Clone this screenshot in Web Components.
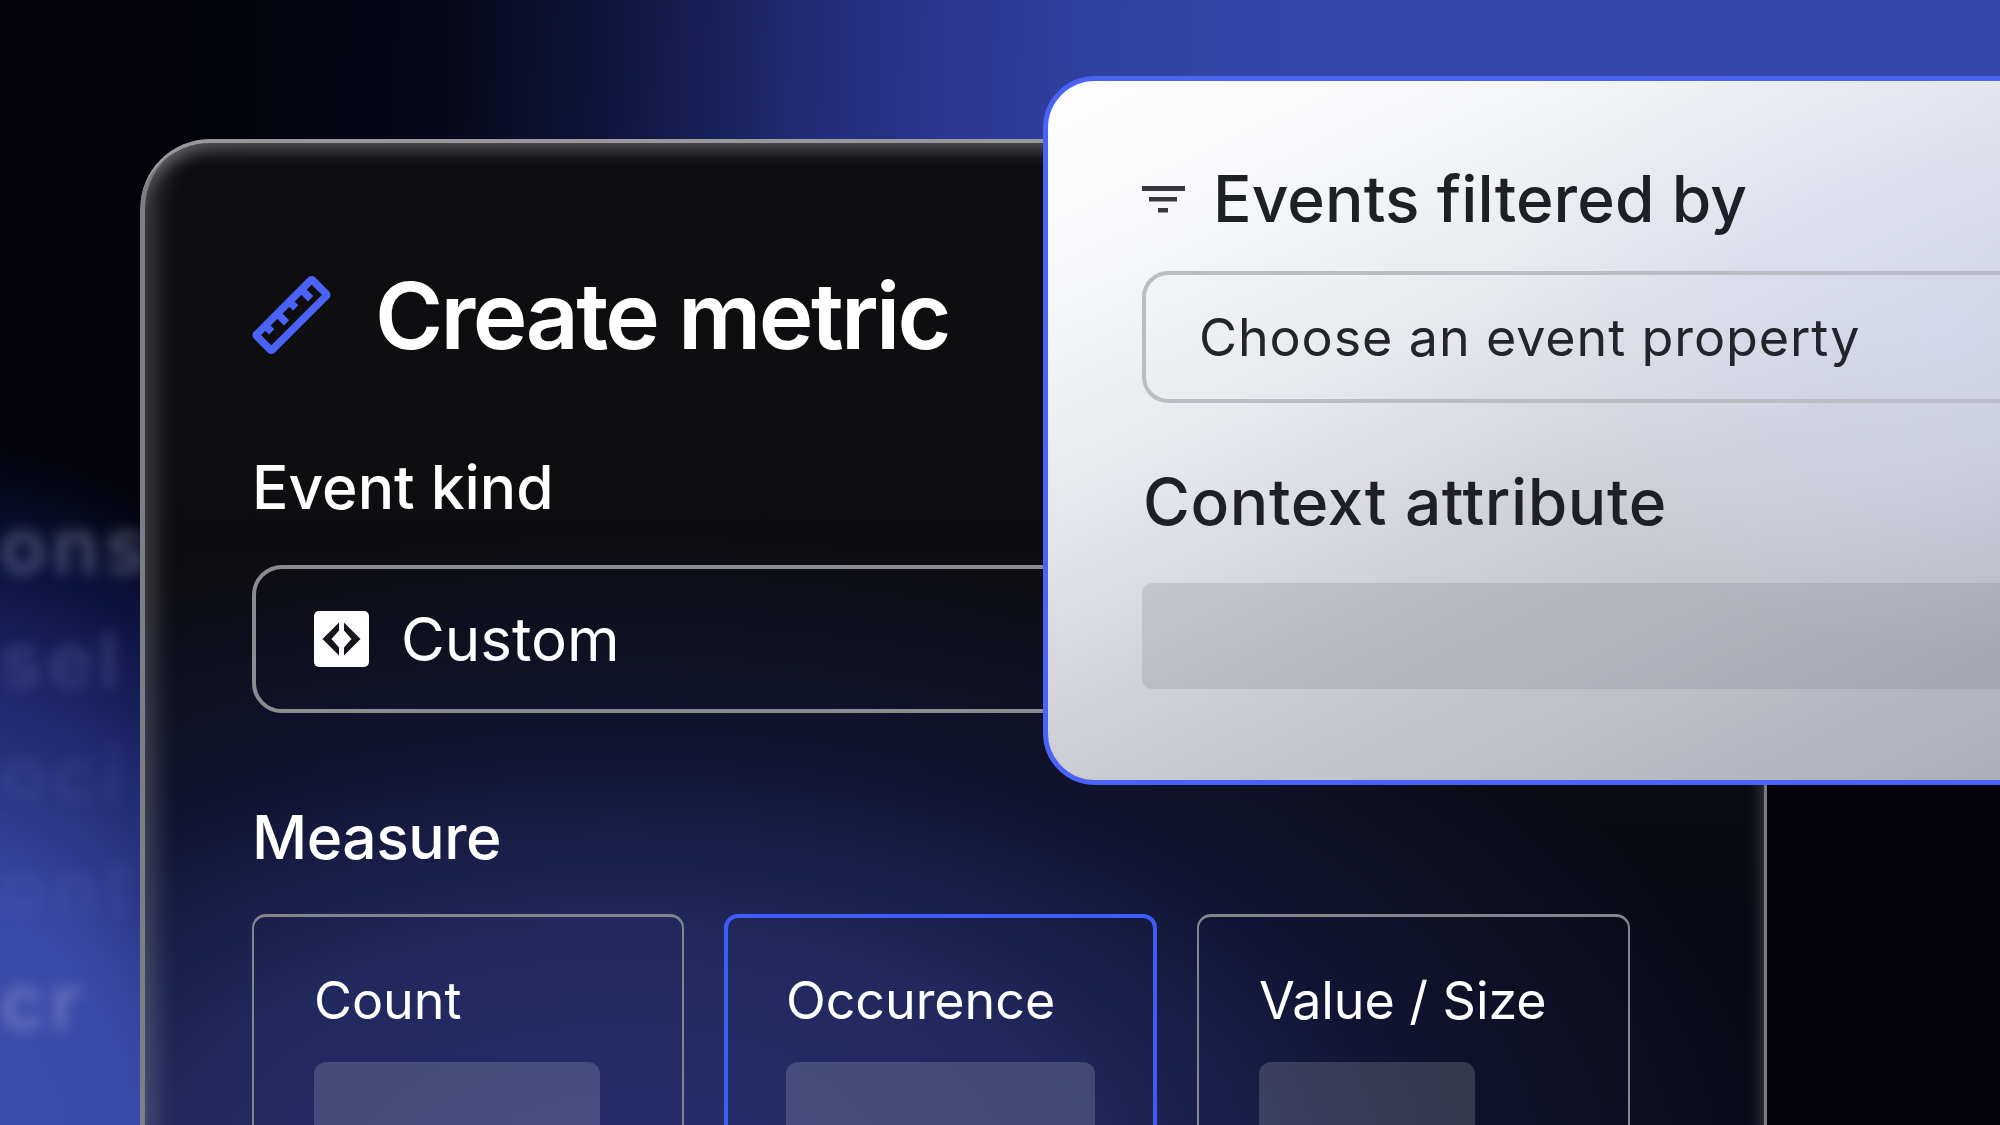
<!doctype html>
<html>
<head>
<meta charset="utf-8">
<style>
  html, body { margin: 0; height: 100%; background: #05050c; overflow: hidden; }
</style>
</head>
<body>
<metric-stage>
  <blur-text slot="backdrop"></blur-text>
  <metric-panel>
    <panel-title>Create metric</panel-title>
    <field-label>Event kind</field-label>
    <kind-select>Custom</kind-select>
    <field-label class="measure">Measure</field-label>
    <measure-row>
      <measure-card bar="286" width="432">Count</measure-card>
      <measure-card bar="309" width="433" selected>Occurence</measure-card>
      <measure-card bar="216" width="433">Value / Size</measure-card>
    </measure-row>
  </metric-panel>
  <filter-card slot="overlay"></filter-card>
</metric-stage>

<script>
(() => {
  const FONT = `Inter, "Noto Sans", "Liberation Sans", sans-serif`;

  const define = (name, html, setup) => {
    customElements.define(name, class extends HTMLElement {
      constructor() {
        super();
        this.attachShadow({mode: 'open'}).innerHTML = html;
      }
      connectedCallback() {
        if (setup) setup(this);
      }
    });
  };

  define('metric-stage', `
    <style>
      :host {
        display: block;
        position: relative;
        width: 2000px;
        height: 1125px;
        overflow: hidden;
        font-family: ${FONT};
        background:
          linear-gradient(92deg, rgba(3,3,9,0) 0, #03030a 220px, #07081a 450px, #0f143a 600px, #1a2460 740px, #212c78 810px, #2a3790 950px, #30409e 1080px, #3346a8 1300px, #3547ab 2000px) top / 100% 220px no-repeat,
          radial-gradient(540px 740px at -60px 1180px, #3f4fb0 0%, #3a4aa8 38%, #212b72 64%, #0d1340 84%, rgba(4,5,16,0) 100%),
          #030309;
      }
      .flow { padding: 139px 0 0 140px; }
    </style>
    <slot name="backdrop"></slot>
    <div class="flow"><slot></slot></div>
    <slot name="overlay"></slot>
  `);

  define('blur-text', `
    <style>
      :host {
        position: absolute;
        left: 0;
        top: 488px;
        font: 600 76px/114px ${FONT};
        letter-spacing: 6px;
        color: rgba(195,200,228,.34);
        filter: blur(7px);
        white-space: nowrap;
      }
      div:nth-child(3) { color: rgba(135,150,225,.26); }
      div:nth-child(4), div:nth-child(5) { color: rgba(110,125,215,.14); }
    </style>
    <div>ons</div><div>sel</div><div>oci</div><div>ont</div><div>cr</div>
  `);

  define('metric-panel', `
    <style>
      :host {
        display: block;
        position: relative;
        box-sizing: border-box;
        width: 1627px;
        height: 1100px;
        padding: 135px 0 0 112px;
        border-radius: 70px 70px 0 0;
        background:
          radial-gradient(1180px 640px at 480px 1040px, #272f6e 0%, #20285c 40%, rgba(20,24,62,.75) 66%, rgba(14,14,20,0) 100%),
          linear-gradient(180deg, #0e0e10 0%, #0e0e11 30%, #0a0a14 70%, #0a0a16 100%);
        box-shadow:
          inset 0 5px 0 -1px #97979c,
          inset 6px 0 0 -1px #7d7d85,
          inset -4px 0 0 -1px #7a7a80,
          inset 0 18px 16px -6px rgba(170,170,175,.42),
          inset 26px 0 22px -10px rgba(170,170,175,.3),
          inset -16px 0 14px -8px rgba(170,170,175,.22);
      }
    </style>
    <slot></slot>
  `);

  define('panel-title', `
    <style>
      :host {
        display: flex;
        align-items: center;
        gap: 43px;
        height: 82px;
        margin-left: -1px;
        font-size: 92.500px;
        font-weight: 600;
        letter-spacing: -2.6px;
        color: #fff;
        white-space: nowrap;
      }
      svg { flex: none; width: 81px; height: 82px; }
    </style>
    <svg viewBox="-40.5 -41 81 82">
      <g transform="rotate(-45)" fill="none" stroke="#4a63f6" stroke-width="7.500" stroke-linejoin="round">
        <rect x="-39.500" y="-11" width="79" height="22" rx="1"/>
        <path d="M-26 -11v9M-9 -11v13M8 -11v9M25 -11v13"/>
      </g>
    </svg>
    <span><slot></slot></span>
  `);

  define('field-label', `
    <style>
      :host {
        display: block;
        margin-top: 95px;
        font-size: 60.500px;
        line-height: 72px;
        font-weight: 500;
        color: #fff;
      }
      :host(.measure) { margin-top: 88px; letter-spacing: -.5px; }
    </style>
    <slot></slot>
  `);

  define('kind-select', `
    <style>
      :host {
        display: flex;
        align-items: center;
        gap: 32px;
        box-sizing: border-box;
        width: 900px;
        height: 148px;
        margin-top: 42px;
        padding-left: 58px;
        border: 4px solid #8b8b92;
        border-radius: 30px;
        font-size: 60px;
        font-weight: 400;
        color: #fff;
      }
      svg { flex: none; width: 55px; height: 56px; }
    </style>
    <svg viewBox="0 0 55 56">
      <rect width="55" height="56" rx="5" fill="#fff"/>
      <path fill="#15151b" d="M25 11.500 8.500 28 25 44.500V36.500L17.500 28 25 19.500ZM30 11.500 46.500 28 30 44.500V36.500L37.500 28 30 19.500Z"/>
    </svg>
    <span><slot></slot></span>
  `);

  define('measure-row', `
    <style>
      :host { display: flex; gap: 40px; margin-top: 41px; }
    </style>
    <slot></slot>
  `);

  define('measure-card', `
    <style>
      :host {
        display: block;
        box-sizing: border-box;
        height: 400px;
        padding: 50px 0 0 60px;
        border: 2px solid #85858c;
        border-top-width: 3px;
        border-radius: 14px;
        font-size: 52px;
        line-height: 68px;
        letter-spacing: -.06px;
        color: #fff;
      }
      :host([selected]) { border: 4px solid #3f5cf5; padding: 49px 0 0 58px; }
      .bar {
        height: 260px;
        margin-top: 27px;
        border-radius: 12px;
        background: rgba(255,255,255,.16);
      }
    </style>
    <slot></slot>
    <div class="bar"></div>
  `, (el) => {
    el.style.width = el.getAttribute('width') + 'px';
    el.shadowRoot.querySelector('.bar').style.width = el.getAttribute('bar') + 'px';
  });

  define('filter-card', `
    <style>
      :host {
        position: absolute;
        left: 1043px;
        top: 76px;
        width: 1100px;
        height: 709px;
        box-sizing: border-box;
        padding: 80px 0 0 94px;
        border: 5px solid #4a63f6;
        border-radius: 52px;
        color: #1f2026;
        background:
          radial-gradient(460px 320px at 900px 250px, rgba(215,220,250,.62) 0%, rgba(215,220,250,0) 100%),
          linear-gradient(155deg, #ffffff 0%, #f5f6f8 19%, #e7e8ed 36%, #cccdd2 58%, #acaeb9 94%);
      }
      .head { display: flex; align-items: center; gap: 28px; height: 76px; }
      svg { flex: none; width: 43px; height: 34px; }
      h2 { margin: 0; font-size: 64px; line-height: 76px; font-weight: 500; letter-spacing: .1px; }
      .input {
        display: flex;
        align-items: center;
        box-sizing: border-box;
        height: 132px;
        margin-top: 34px;
        padding-left: 53px;
        border: 4px solid #bcbdc4;
        border-right: 0;
        border-radius: 26px 0 0 26px;
        font-size: 52px;
        letter-spacing: .9px;
        color: #24252b;
      }
      .sub { margin-top: 61px; margin-left: 1px; letter-spacing: .6px; }
      .block {
        height: 106px;
        margin-top: 43px;
        border-radius: 10px 0 0 10px;
        background: rgba(120,120,130,.22);
      }
    </style>
    <div class="head">
      <svg viewBox="0 0 43 34" fill="#37383f"><rect y="4" width="43" height="5"/><rect x="7" y="15" width="28" height="4.500"/><rect x="16" y="26" width="10" height="4.500"/></svg>
      <h2>Events filtered by</h2>
    </div>
    <div class="input">Choose an event property</div>
    <h2 class="sub">Context attribute</h2>
    <div class="block"></div>
  `);
})();
</script>
</body>
</html>
